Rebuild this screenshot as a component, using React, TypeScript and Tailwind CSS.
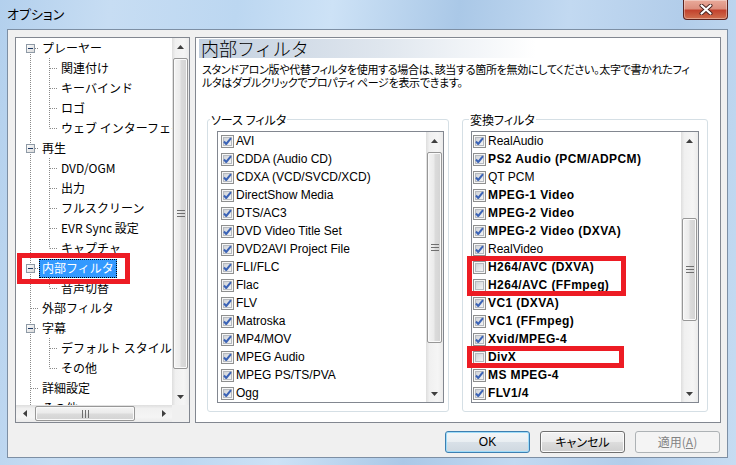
import React from "react";

const JP = "font-['Noto_Sans_CJK_JP',sans-serif]";
const UI = "font-['Liberation_Sans','Noto_Sans_CJK_JP',sans-serif]";

type TNode = {
  t: string;
  l: 0 | 1;
  box?: boolean;
  last?: boolean;
  first?: boolean;
  lastTop?: boolean;
  sel?: boolean;
};

const tree: TNode[] = [
  { t: "プレーヤー", l: 0, box: true, first: true },
  { t: "関連付け", l: 1 },
  { t: "キーバインド", l: 1 },
  { t: "ロゴ", l: 1 },
  { t: "ウェブ インターフェイス", l: 1, last: true },
  { t: "再生", l: 0, box: true },
  { t: "DVD/OGM", l: 1 },
  { t: "出力", l: 1 },
  { t: "フルスクリーン", l: 1 },
  { t: "EVR Sync 設定", l: 1 },
  { t: "キャプチャ", l: 1, last: true },
  { t: "内部フィルタ", l: 0, box: true, sel: true },
  { t: "音声切替", l: 1, last: true },
  { t: "外部フィルタ", l: 0 },
  { t: "字幕", l: 0, box: true },
  { t: "デフォルト スタイル", l: 1 },
  { t: "その他", l: 1, last: true },
  { t: "詳細設定", l: 0 },
  { t: "その他", l: 0, lastTop: true },
];

const source: string[] = [
  "AVI",
  "CDDA (Audio CD)",
  "CDXA (VCD/SVCD/XCD)",
  "DirectShow Media",
  "DTS/AC3",
  "DVD Video Title Set",
  "DVD2AVI Project File",
  "FLI/FLC",
  "Flac",
  "FLV",
  "Matroska",
  "MP4/MOV",
  "MPEG Audio",
  "MPEG PS/TS/PVA",
  "Ogg",
];

const transform: { t: string; b?: boolean; off?: boolean }[] = [
  { t: "RealAudio" },
  { t: "PS2 Audio (PCM/ADPCM)", b: true },
  { t: "QT PCM" },
  { t: "MPEG-1 Video", b: true },
  { t: "MPEG-2 Video", b: true },
  { t: "MPEG-2 Video (DXVA)", b: true },
  { t: "RealVideo" },
  { t: "H264/AVC (DXVA)", b: true, off: true },
  { t: "H264/AVC (FFmpeg)", b: true, off: true },
  { t: "VC1 (DXVA)", b: true },
  { t: "VC1 (FFmpeg)", b: true },
  { t: "Xvid/MPEG-4", b: true },
  { t: "DivX", b: true, off: true },
  { t: "MS MPEG-4", b: true },
  { t: "FLV1/4", b: true },
];

function TreeLines({ n }: { n: TNode }) {
  const w = n.l === 0 ? 23 : 42;
  const dot = { stroke: "#8a8a8a", strokeDasharray: "1 1" };
  return (
    <svg width={w} height={20} className="shrink-0">
      <defs>
        <linearGradient id="tbx" x1="0" y1="0" x2="1" y2="1">
          <stop offset="0" stopColor="#ffffff" />
          <stop offset="1" stopColor="#d8d8d8" />
        </linearGradient>
      </defs>
      <line x1="14.5" x2="14.5" y1={n.first ? 10 : 0} y2={n.lastTop ? 10.5 : 20} {...dot} />
      {n.l === 0 && <line x1={n.box ? 19 : 15} y1="10.5" x2="23" y2="10.5" {...dot} />}
      {n.l === 0 && n.box && (
        <g>
          <rect x="10.5" y="6.5" width="8" height="8" fill="url(#tbx)" stroke="#8f9aa6" />
          <line x1="12" y1="10.5" x2="17" y2="10.5" stroke="#1e3a66" />
        </g>
      )}
      {n.l === 1 && (
        <g>
          <line x1="33.5" x2="33.5" y1="0" y2={n.last ? 10.5 : 20} {...dot} />
          <line x1="34" y1="10.5" x2="42" y2="10.5" {...dot} />
        </g>
      )}
    </svg>
  );
}

function Arrow({ dir }: { dir: "up" | "down" | "left" | "right" }) {
  const d =
    dir === "up"
      ? "M3.5 0 L7 4 L0 4 Z"
      : dir === "down"
      ? "M0 0 L7 0 L3.5 4 Z"
      : dir === "left"
      ? "M0 3.5 L4 0 L4 7 Z"
      : "M0 0 L4 3.5 L0 7 Z";
  const w = dir === "up" || dir === "down" ? 7 : 4;
  const h = dir === "up" || dir === "down" ? 4 : 7;
  return (
    <svg width={w} height={h} viewBox={`0 0 ${w} ${h}`}>
      <path d={d} fill="#3f3f3f" />
    </svg>
  );
}

function VGrip() {
  return (
    <svg width="8" height="7" viewBox="0 0 8 7">
      <g stroke="#6f6f6f">
        <line x1="0" y1="0.5" x2="8" y2="0.5" />
        <line x1="0" y1="3.5" x2="8" y2="3.5" />
        <line x1="0" y1="6.5" x2="8" y2="6.5" />
      </g>
    </svg>
  );
}

function HGrip() {
  return (
    <svg width="7" height="8" viewBox="0 0 7 8">
      <g stroke="#6f6f6f">
        <line x1="0.5" y1="0" x2="0.5" y2="8" />
        <line x1="3.5" y1="0" x2="3.5" y2="8" />
        <line x1="6.5" y1="0" x2="6.5" y2="8" />
      </g>
    </svg>
  );
}

function VScroll({ top, thumb }: { top: string; thumb: string }) {
  return (
    <div className="w-[17px] h-full shrink-0 flex flex-col bg-[linear-gradient(to_right,#dedede,#f0f0f0_20%,#f5f5f5_70%,#ebebeb)]">
      <div className="h-[17px] shrink-0 flex items-center justify-center">
        <Arrow dir="up" />
      </div>
      <div className="flex-1 flex flex-col px-[1px]">
        <div className={top} />
        <div
          className={`${thumb} rounded-[2px] border border-[#979797] bg-[linear-gradient(to_right,#f4f4f4,#ebebeb_45%,#dbdbdb_55%,#d3d3d3)] shadow-[inset_0_0_0_1px_#fafafa] flex items-center justify-center`}
        >
          <VGrip />
        </div>
      </div>
      <div className="h-[17px] shrink-0 flex items-center justify-center">
        <Arrow dir="down" />
      </div>
    </div>
  );
}

function Check({ on }: { on: boolean }) {
  return (
    <svg width="13" height="13" viewBox="0 0 13 13" className="shrink-0">
      <defs>
        <linearGradient id="cbi" x1="0" y1="0" x2="1" y2="1">
          <stop offset="0" stopColor="#cdd0d5" />
          <stop offset="1" stopColor="#f7f7f7" />
        </linearGradient>
      </defs>
      <rect x="0.5" y="0.5" width="12" height="12" fill="#f6f6f6" stroke="#8e8f8f" />
      <rect x="2.5" y="2.5" width="8" height="8" fill="url(#cbi)" stroke="#b5b9bf" />
      {on && (
        <path d="M3 6.5 L5.2 9 L10 3.2" fill="none" stroke="#3b63b6" strokeWidth="2" strokeLinejoin="round" />
      )}
    </svg>
  );
}

function ListRow({ t, on = true, b = false }: { t: string; on?: boolean; b?: boolean }) {
  return (
    <div className="h-[18px] flex items-center gap-[2px] whitespace-nowrap">
      <Check on={on} />
      <span className={`${UI} text-[12px] leading-[14px] text-black ${b ? "font-bold tracking-[0.4px]" : ""}`}>{t}</span>
    </div>
  );
}

function Btn({ children, kind }: { children: React.ReactNode; kind: "def" | "norm" | "dis" }) {
  const cls =
    kind === "def"
      ? "border-[#3c7fb1] bg-[linear-gradient(to_bottom,#f3f6f8_0%,#e9eef2_50%,#d9e1e8_50%,#cfd8e0_100%)] shadow-[inset_0_0_0_1px_#9fdcf9] text-black"
      : kind === "norm"
      ? "border-[#707070] bg-[linear-gradient(to_bottom,#f2f2f2_0%,#ebebeb_50%,#dddddd_50%,#cfcfcf_100%)] shadow-[inset_0_0_0_1px_#fcfcfc] text-black"
      : "border-[#adb2b5] bg-[#f4f4f4] text-[#838383]";
  return (
    <div
      className={`w-[85px] h-[22px] rounded-[3px] border flex items-center justify-center ${JP} text-[12px] leading-[14px] [font-feature-settings:'palt'] ${cls}`}
    >
      {children}
    </div>
  );
}

export default function App() {
  return (
    <div className="relative w-[736px] h-[465px] overflow-hidden flex flex-col bg-[linear-gradient(97deg,#b3d0ed_0%,#c7ddf3_14%,#bcd7f1_30%,#cde2f6_42%,#aac8e7_58%,#c2d9f1_72%,#b2cdea_86%,#c6dcf2_100%)]">
      {/* title bar */}
      <div className="h-[29px] shrink-0 flex items-start justify-between pl-[7px] pr-[8px]">
        <span className={`${JP} mt-[6px] text-[13px] leading-[16px] text-black [font-feature-settings:'palt']`}>オプション</span>
        <div className="w-[45px] h-[20px] rounded-b-[4px] border border-t-0 border-[#5a2320] bg-[linear-gradient(to_bottom,#e9aa9a_0%,#dc8f7e_45%,#c2432e_55%,#d0704f_100%)] shadow-[inset_0_0_0_1px_rgba(255,255,255,0.35)] flex items-center justify-center">
          <svg width="14" height="11" viewBox="0 0 14 11">
            <path d="M2.5 1.5 L11.5 9.5 M11.5 1.5 L2.5 9.5" stroke="#47221e" strokeWidth="4" strokeLinecap="round" />
            <path d="M2.5 1.5 L11.5 9.5 M11.5 1.5 L2.5 9.5" stroke="#ffffff" strokeWidth="2.2" strokeLinecap="round" />
          </svg>
        </div>
      </div>

      {/* client area */}
      <div className="ml-[7px] mr-[8px] h-[429px] shrink-0 border border-[#7d8fa4] bg-[#f0f0f0] flex flex-col pl-[7px] pt-[7px] pr-[6px]">
        <div className="flex gap-[5px] h-[386px]">
          {/* tree */}
          <div className="w-[175px] h-[386px] border border-[#828790] bg-white flex flex-col">
            <div className="flex flex-1 min-h-0">
              <div className={`flex-1 overflow-hidden ${JP} text-[12px] leading-[16px] text-black`}>
                {tree.map((n, i) => (
                  <div key={i} className="h-[20px] flex items-center whitespace-nowrap">
                    <TreeLines n={n} />
                    <span
                      className={
                        n.sel
                          ? "px-[3px] h-[19px] flex items-center bg-[#3399ff] text-white outline-1 outline-dotted outline-black -outline-offset-1"
                          : "px-[3px]"
                      }
                    >
                      {n.t}
                    </span>
                  </div>
                ))}
              </div>
              <VScroll top="h-[3px]" thumb="h-[311px]" />
            </div>
            <div className="flex h-[17px] shrink-0">
              <div className="flex-1 flex bg-[linear-gradient(to_bottom,#dedede,#f0f0f0_20%,#f5f5f5_70%,#ebebeb)]">
                <div className="w-[17px] shrink-0 flex items-center justify-center">
                  <Arrow dir="left" />
                </div>
                <div className="flex-1 flex py-[1px]">
                  <div className="w-[2px]" />
                  <div className="w-[100px] rounded-[2px] border border-[#979797] bg-[linear-gradient(to_bottom,#f4f4f4,#ebebeb_45%,#dbdbdb_55%,#d3d3d3)] shadow-[inset_0_0_0_1px_#fafafa] flex items-center justify-center">
                    <HGrip />
                  </div>
                </div>
                <div className="w-[17px] shrink-0 flex items-center justify-center">
                  <Arrow dir="right" />
                </div>
              </div>
              <div className="w-[17px] bg-[#f0f0f0]" />
            </div>
          </div>

          {/* right panel */}
          <div className="w-[526px] h-[386px] border border-[#828790] bg-white flex flex-col">
            <div className="mt-[1px] mx-[3px] h-[19px] pl-[2px] flex items-center bg-[linear-gradient(to_right,#c3d0df,#dfe6ee_35%,#ffffff_65%)]">
              <span className={`${JP} font-light text-[18px] leading-[19px] text-black`}>内部フィルタ</span>
            </div>
            <div className={`mt-[5px] pl-[6px] ${JP} text-[11px] leading-[13px] text-black whitespace-nowrap [font-feature-settings:'palt'] tracking-[-0.3px]`}>
              <div className="h-[13px]">スタンドアロン版や代替フィルタを使用する場合は、該当する箇所を無効にしてください。太字で書かれたフィ</div>
              <div className="h-[13px]">ルタはダブルクリックでプロパティ ページを表示できます。</div>
            </div>
            <div className="mt-[24px] flex pl-[11px] gap-[13px]">
              <fieldset className="w-[242px] border border-[#d5dfe5] rounded-[3px] p-0">
                <legend className={`ml-[2px] px-[1px] ${JP} text-[12px] leading-[13px] text-black [font-feature-settings:'palt']`}>
                  ソース フィルタ
                </legend>
                <div className="pl-[9px] pr-[4px] pb-[8px] pt-[5px]">
                  <div className="w-[227px] h-[272px] border border-[#828790] bg-white flex">
                    <div className="flex-1 pl-[3px] overflow-hidden">
                      {source.map((s) => (
                        <ListRow key={s} t={s} />
                      ))}
                    </div>
                    <VScroll top="h-[3px]" thumb="h-[191px]" />
                  </div>
                </div>
              </fieldset>
              <fieldset className="w-[246px] border border-[#d5dfe5] rounded-[3px] p-0">
                <legend className={`ml-[6px] px-[1px] ${JP} text-[12px] leading-[13px] text-black [font-feature-settings:'palt']`}>
                  変換フィルタ
                </legend>
                <div className="px-[8px] pb-[8px] pt-[5px]">
                  <div className="w-[228px] h-[272px] border border-[#828790] bg-white flex">
                    <div className="flex-1 pl-[1px] overflow-hidden">
                      {transform.map((s) => (
                        <ListRow key={s.t} t={s.t} b={s.b} on={!s.off} />
                      ))}
                    </div>
                    <VScroll top="h-[69px]" thumb="h-[103px]" />
                  </div>
                </div>
              </fieldset>
            </div>
          </div>
        </div>

        {/* buttons */}
        <div className="mt-[8px] flex justify-end gap-[10px] pr-[1px]">
          <Btn kind="def">
            <span className={UI}>OK</span>
          </Btn>
          <Btn kind="norm">キャンセル</Btn>
          <Btn kind="dis">
            適用(<span className="underline">A</span>)
          </Btn>
        </div>
      </div>

      {/* red annotation boxes */}
      <div className="absolute left-[17px] top-[253px] w-[113px] h-[31px] border-[5px] border-[#ed1c24]" />
      <div className="absolute left-[467px] top-[256px] w-[159px] h-[40px] border-[5px] border-[#ed1c24]" />
      <div className="absolute left-[467px] top-[346px] w-[157px] h-[22px] border-[5px] border-[#ed1c24]" />
    </div>
  );
}
